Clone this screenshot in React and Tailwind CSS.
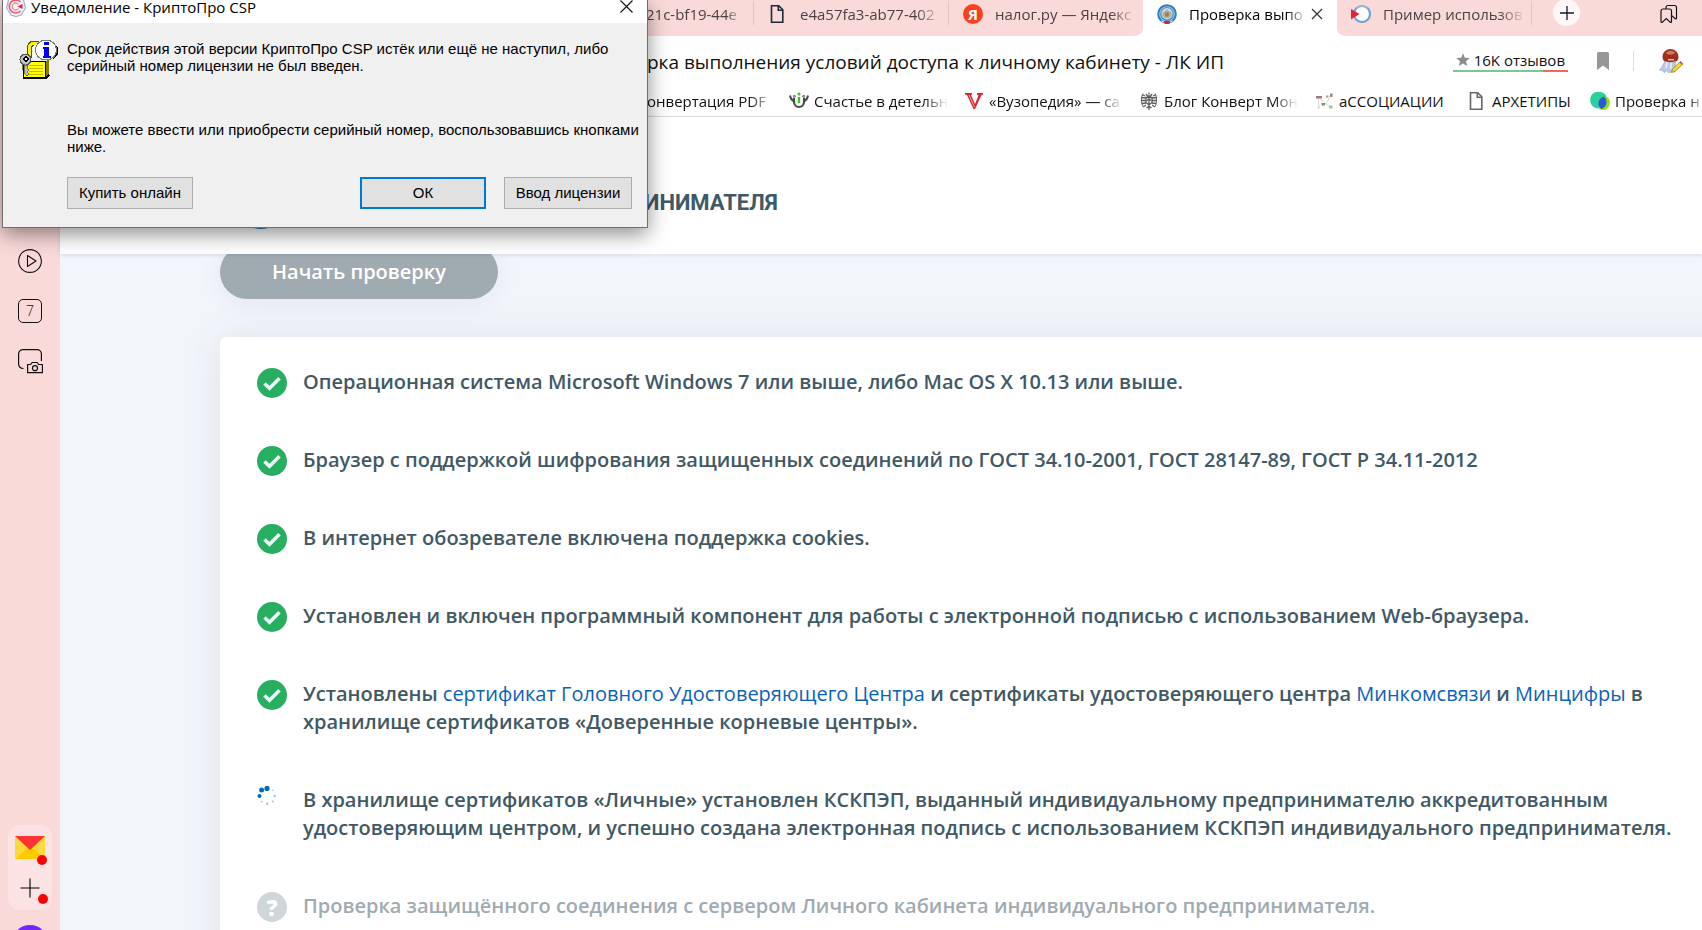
// src/App.jsx

import React from "react";

const FADE = "[mask-image:linear-gradient(to_right,black_82%,transparent)]";

function FileIcon({ color = "#1f2937" }) {
  return (
    <svg viewBox="0 0 20 20" className="size-5 shrink-0" fill="none" stroke={color} strokeWidth="1.6">
      <path d="M3.500 1.800h7.300l4 4v12.400H3.500z" />
      <path d="M10.300 1.800v4.500h4.500" />
    </svg>
  );
}

function YandexIcon() {
  return (
    <span className="flex size-5 shrink-0 items-center justify-center rounded-full bg-[#fc3f1d] text-[15px] leading-none font-bold text-white">
      Я
    </span>
  );
}

function EmblemIcon() {
  return (
    <svg viewBox="0 0 20 20" className="size-5 shrink-0">
      <circle cx="10" cy="10" r="9.8" fill="#2a7cc4" />
      <circle cx="10" cy="10" r="7.8" fill="#a9cdec" />
      <circle cx="10" cy="10" r="6.9" fill="#4b93d2" />
      <circle cx="10" cy="9.6" r="5.6" fill="#dcdcda" />
      <path d="M5.500 7.500l1.600.5L10 5l2.900 3 1.600-.5v4.300L12 14H8l-2.500-2.200z" fill="#b9ab94" />
      <path d="M8.2 8.600h3.600v3.200L10 13l-1.800-1.200z" fill="#8a8274" />
      <path d="M6.500 18l1.300-1h4.400l1.300 1-1.500 2H8z" fill="#d8232a" />
      <path d="M4.500 16.800l2.500 1.400M15.500 16.800L13 18.200" stroke="#fff" strokeWidth="1" />
    </svg>
  );
}

function HeaderLogo() {
  return (
    <svg viewBox="0 0 52 52" className="size-[52px] shrink-0">
      <circle cx="26" cy="26" r="26" fill="#1d6fb8" />
      <circle cx="26" cy="26" r="19" fill="#fff" />
      <circle cx="26" cy="26" r="16" fill="#5ba3de" />
    </svg>
  );
}

function CryptoIcon() {
  return (
    <svg viewBox="0 0 20 20" className="size-5 shrink-0">
      <circle cx="11" cy="10" r="8" fill="#fff" stroke="#6fa3d0" strokeWidth="2.2" />
      <path d="M5.3 4.4a8 8 0 0 1 11.4 0" fill="none" stroke="#9fb9cf" strokeWidth="1.6" />
      <path d="M0 5l8.500 5L0 15.500z" fill="#e5213b" />
    </svg>
  );
}

function CupIcon() {
  return (
    <svg viewBox="0 0 20 20" className="size-5 shrink-0" fill="none">
      <path d="M5 6.500v4.500a5 5 0 0 0 10 0V6.500" stroke="#4a4a4a" strokeWidth="2.200" />
      <path d="M5.500 10C2.500 9.500 1.500 7.500 1 4.500M14.500 10c3-.5 4-2.500 4.500-5.500" stroke="#4a4a4a" strokeWidth="2" />
      <path d="M4 5.500c1-1 2-1 2.500.5M16 5.500c-1-1-2-1-2.500.5" stroke="#777" strokeWidth="1.400" />
      <circle cx="10" cy="3" r="1.600" fill="#3fc51f" />
      <path d="M10 5.800v6.200" stroke="#3fc51f" strokeWidth="2.400" />
    </svg>
  );
}

function VIcon() {
  return (
    <svg viewBox="0 0 20 20" className="size-5 shrink-0">
      <path d="M1 2h7v1.500L7 4l4 9 3.500-8.500L13 3.500V2h6v1.500l-1.500.5L11 18H9.500L3 4 1 3.500z" fill="#d8262c" />
      <path d="M5 4l5.500 12" stroke="#f4b3b3" strokeWidth=".9" />
    </svg>
  );
}

function CoatIcon() {
  return (
    <svg viewBox="0 0 20 20" className="size-5 shrink-0" fill="none" stroke="#5c5c5c" strokeWidth="1.300">
      <path d="M3 3.500l3 1.500M2 6.500l5 .5M2.500 9.500h5M3 12.500l4-.5M4 16l3-2" />
      <path d="M17 3.500l-3 1.500M18 6.500l-5 .5M17.500 9.500h-5M17 12.500l-4-.5M16 16l-3-2" />
      <path d="M4 2.500c-2 3-2 10 0 13M16 2.500c2 3 2 10 0 13" strokeWidth="1" />
      <path d="M7 3l1.500 2h3L13 3M10 1.500v2M7 6.500h6v5L10 14l-3-2.500zM10 7v6M8 9h4M7.500 17l2.500-2 2.500 2M10 15v4" />
    </svg>
  );
}

function GraphIcon() {
  return (
    <svg viewBox="0 0 20 20" className="size-5 shrink-0">
      <path d="M4 6l8 7 5-9M12 13l4 3M4 6l1 10" stroke="#dcd9d2" strokeWidth="1" fill="none" />
      <rect x="2" y="5" width="6" height="2.500" fill="#9b7f7c" />
      <rect x="16" y="2.500" width="2.500" height="3.500" fill="#9a8a6a" />
      <rect x="7.500" y="12" width="3.500" height="2.500" fill="#7f9468" />
      <rect x="12" y="4.500" width="2.500" height="2" fill="#a99a94" />
      <rect x="15" y="14.500" width="3.500" height="3" fill="#a4cb8a" />
      <rect x="3.500" y="15.500" width="2" height="2" fill="#cfd3b9" />
    </svg>
  );
}

function BlobIcon() {
  return (
    <svg viewBox="0 0 20 20" className="size-5 shrink-0">
      <path d="M8.500.8c5 0 8.500 3 8.500 8s-3 8.700-8 8.700S.2 14 .2 9 3.500.8 8.500.8z" fill="#2ad19a" />
      <path d="M13.500 6c3.500-1 6.300 1 6.300 5.500 0 4-2.800 7.500-6.800 7.500-2.500 0-4-1-4-1.500z" fill="#8ee01c" />
      <path d="M14 5.500c2 2 2.800 4 2.500 6.300-.3 2.700-2 5-5 6.200-2-1.500-3.300-3.500-3-6.500.3-2.800 2.500-5 5.500-6z" fill="#2d57d6" />
    </svg>
  );
}

function ProfileIcon() {
  return (
    <svg viewBox="0 0 26 26" className="size-6.5 shrink-0">
      <path d="M7 13l-3 6-2.500 3 3 .5 1.500 2 3-2 2 2.500 3-2 2.500 1 1-10z" fill="#b9c9e6" stroke="#8fa3c6" strokeWidth=".7" />
      <path d="M9 14l-1 6M13 14v7" stroke="#eef3fb" strokeWidth="1.400" />
      <path d="M4.500 9c0-5 4-8 8-8s8 3 8 8c0 3-1.500 4.500-4 4.500-2.500 1-6 1-8 0-2.500 0-4-1.500-4-4.500z" fill="#9d2f1e" />
      <path d="M8 5c2-2.500 6.500-3 9-.5-1 2.500-7 3-9 .5z" fill="#d8735c" />
      <path d="M10 11h6v1.500h-6z" fill="#f0b49a" />
      <path d="M13.500 24.500l1-3.500 8-7.500 2.500 2.500-8 7.500z" fill="#f7d62e" stroke="#8a6d12" strokeWidth=".7" />
      <path d="M21.500 14.500l1-1.500 2.500 2.500-1.200 1.200z" fill="#e4565b" />
    </svg>
  );
}

function LockIcon() {
  return (
    <svg viewBox="0 0 40 40" className="size-10 shrink-0" shapeRendering="crispEdges">
      <path d="M10 19V8l3-4h7" fill="none" stroke="#555500" strokeWidth="5" />
      <path d="M10 19V8l3-4h7" fill="none" stroke="#f5f500" strokeWidth="3" />
      <path d="M15 18V8l3-2" fill="none" stroke="#fff" strokeWidth="2" />
      <path d="M3 22h24l3-3v18l-3 3H4z" fill="#808000" />
      <path d="M4 22h22v16H4z" fill="#ffff00" stroke="#000" strokeWidth="1" />
      <path d="M10 26h14M10 29h14M10 32h14M10 35h14" stroke="#c5b800" strokeWidth="1" />
      <path d="M4 39h23l3-3" stroke="#000" strokeWidth="1.500" fill="none" />
      <circle cx="6.500" cy="20.500" r="5.500" fill="#c0c0c0" stroke="#555" />
      <circle cx="7" cy="20" r="2" fill="#fff" stroke="#000" strokeWidth="1.500" />
      <path d="M5.500 26v9l2 2 2-2-1-2 1-2-1-2V26z" fill="#c0c0c0" stroke="#555" strokeWidth=".8" />
      <path d="M36 6l3 2v7l-5 5z" fill="#000" />
      <ellipse cx="27" cy="11" rx="10.500" ry="10" fill="#fff" stroke="#777" strokeWidth="1" />
      <path d="M25 3h5v3h-5zM23.500 8H30v9h2v2h-8.500v-2H25v-7h-1.500z" fill="#0000f0" />
    </svg>
  );
}

function CspIcon() {
  return (
    <svg viewBox="0 0 20 20" className="size-5 shrink-0" fill="none">
      <path d="M3 1h14l2.500 10L15 18l-5 1.500L5 18 .5 11z" fill="#eef3f8" stroke="#9fb0c4" strokeWidth="1.200" />
      <path d="M14.500 5a6.500 6.500 0 1 0 0 9" stroke="#f0606e" strokeWidth="1.700" />
      <path d="M12.500 7.500a3.500 3.500 0 1 0 0 4" stroke="#f58a94" strokeWidth="1.300" />
      <path d="M11.500 9.500l5-2.500v5z" fill="#e5213b" />
    </svg>
  );
}

function CheckIcon() {
  return (
    <svg viewBox="0 0 30 30" className="size-[30px] shrink-0">
      <circle cx="15" cy="15" r="15" fill="#27ae60" />
      <path d="M7.500 15.500l5 4.800L22.500 10.300" fill="none" stroke="#f1f4fa" strokeWidth="3.600" />
    </svg>
  );
}

function SpinnerIcon() {
  return (
    <svg viewBox="0 0 30 30" className="size-[30px] shrink-0">
      <g fill="#0b6ab8">
        <circle cx="2.500" cy="10" r="2.100" />
        <circle cx="4.600" cy="4" r="2.500" />
        <circle cx="10" cy="2.400" r="2.600" />
      </g>
      <g fill="#9cc4e4">
        <circle cx="15.800" cy="4.300" r="0.800" />
        <circle cx="17.700" cy="10" r="1.200" />
        <circle cx="15.800" cy="15.600" r="1" />
        <circle cx="10.200" cy="17.700" r="1.200" />
        <circle cx="4.600" cy="15.600" r="0.900" />
      </g>
    </svg>
  );
}

function QuestionIcon() {
  return (
    <span className="flex size-[30px] shrink-0 items-center justify-center rounded-full bg-[#cfd6da] text-[22px] leading-none font-extrabold text-white">
      ?
    </span>
  );
}

function Tab({ icon, title, active }) {
  return (
    <div className="flex h-9 w-[194px] shrink-0 items-center pb-2">
      <button
        className={`flex min-w-0 flex-1 items-center gap-3 pl-3.5 text-left text-[15px] leading-5 ${
          active ? "text-black" : "text-[#4d4143]"
        }`}
      >
        {icon}
        <span className={`overflow-hidden whitespace-nowrap ${active ? "w-[118px]" : "w-[142px]"} ${FADE}`}>
          {title}
        </span>
      </button>
      {active ? (
        <button aria-label="Закрыть" className="mr-3.5 shrink-0">
          <svg viewBox="0 0 12 12" className="size-3" stroke="#333" strokeWidth="1.200">
            <path d="M1 1l10 10M11 1L1 11" />
          </svg>
        </button>
      ) : null}
    </div>
  );
}

function TabBar() {
  return (
    <div className="flex h-9 bg-white">
      <div className="flex shrink-0 rounded-br-lg bg-[#fadad9]">
        <div className="flex h-9 w-[753px] shrink-0 items-center justify-end pr-2.5 pb-2 text-[15px] leading-5 text-[#4d4143]">
          <span className={`w-[97px] overflow-hidden whitespace-nowrap ${FADE}`}>21c-bf19-44e</span>
        </div>
        <div className="mt-px h-6 w-px bg-[#e3c5c5]" />
        <Tab icon={<FileIcon />} title="e4a57fa3-ab77-402" />
        <div className="mt-px h-6 w-px bg-[#e3c5c5]" />
        <Tab icon={<YandexIcon />} title="налог.ру — Яндекс" />
      </div>
      <Tab icon={<EmblemIcon />} title="Проверка выпо" active />
      <div className="flex flex-1 justify-between rounded-bl-lg bg-[#fadad9]">
        <div className="flex">
          <Tab icon={<CryptoIcon />} title="Пример использов" />
          <div className="mt-px h-6 w-px bg-[#e3c5c5]" />
          <button
            aria-label="Новая вкладка"
            className="-mt-px ml-[21px] flex size-[27px] items-center justify-center rounded-full bg-[#fff7f7]"
          >
            <svg viewBox="0 0 14 14" className="size-3.5" stroke="#111a2b" strokeWidth="1.300">
              <path d="M7 0v14M0 7h14" />
            </svg>
          </button>
        </div>
        <button aria-label="Коллекции" className="mr-6 self-start pt-1">
          <svg viewBox="0 0 18 20" className="h-5 w-[18px]" fill="none" stroke="#111" strokeWidth="1.200">
            <path d="M1 17.500V7a2 2 0 0 1 2-2h6.500a2 2 0 0 1 2 2v10.500c0 1-.8 1.200-1.400.6L6.300 14.500l-3.900 3.600c-.6.600-1.400.4-1.400-.6z" />
            <path d="M6 5V3.500a2 2 0 0 1 2-2h6.500a2 2 0 0 1 2 2V14c0 1-.8 1.200-1.400.6L11.500 11.500" />
          </svg>
        </button>
      </div>
    </div>
  );
}

function Bookmark({ icon, title, width, fade }) {
  return (
    <a href="#" className="flex shrink-0 items-center gap-[5px]">
      {icon}
      <span className={`overflow-hidden whitespace-nowrap ${width} ${fade ? FADE : ""}`}>{title}</span>
    </a>
  );
}

function Toolbar() {
  return (
    <div className="border-b border-[#e0e0e0] bg-white">
      <div className="flex h-[50px] items-center justify-between pr-[18px] pl-[587px]">
        <p className="pt-0.5 text-[19px] leading-6 whitespace-nowrap text-[#111]">
          рка выполнения условий доступа к личному кабинету - ЛК ИП
        </p>
        <div className="flex items-center">
          <a href="#" className="text-[15px] leading-5 whitespace-nowrap text-[#111]">
            <span className="flex items-center gap-1 px-[3px]">
              <svg viewBox="0 0 14 14" className="size-3.5" fill="#8e8e8e">
                <path d="M7 .3l1.800 4.400 4.900.4-3.700 3.200 1.200 4.800L7 10.500l-4.200 2.600L4 8.300.3 5.100l4.900-.4z" />
              </svg>
              16K отзывов
            </span>
            <span className="flex h-0.5">
              <span className="w-[78%] bg-[#7cc78f]" />
              <span className="flex-1 bg-[#f0695a]" />
            </span>
          </a>
          <button aria-label="В закладки" className="ml-[29px]">
            <svg viewBox="0 0 12 18" className="h-[18px] w-3" fill="#969696">
              <path d="M0 1.500A1.500 1.500 0 0 1 1.500 0h9A1.500 1.500 0 0 1 12 1.500V18l-6-4.500L0 18z" />
            </svg>
          </button>
          <span className="mr-6 ml-6 h-5 w-px bg-[#dcdcdc]" />
          <button aria-label="Профиль">
            <ProfileIcon />
          </button>
        </div>
      </div>
      <div className="flex h-[30px] items-center gap-4 overflow-hidden pl-[587px] text-[15px] leading-6 text-[#111]">
        <a href="#" className={`w-[126px] shrink-0 overflow-hidden whitespace-nowrap ${FADE}`}>
          онвертация PDF
        </a>
        <Bookmark icon={<CupIcon />} title="Счастье в детельн" width="w-[134px]" fade />
        <Bookmark icon={<VIcon />} title="«Вузопедия» — са" width="w-[134px]" fade />
        <Bookmark icon={<CoatIcon />} title="Блог Конверт Мон" width="w-[134px]" fade />
        <Bookmark icon={<GraphIcon />} title="аССОЦИАЦИИ" width="w-[112px]" />
        <Bookmark icon={<FileIcon color="#666" />} title="АРХЕТИПЫ" width="w-[82px]" />
        <Bookmark icon={<BlobIcon />} title="Проверка н" width="w-[90px]" fade />
      </div>
    </div>
  );
}

function Sidebar() {
  return (
    <aside className="flex w-15 shrink-0 flex-col items-center bg-[#fadad9] pt-[213px]">
      <div className="flex flex-col gap-[26px]">
        <button aria-label="Видео">
          <svg viewBox="0 0 24 24" className="size-6" fill="none" stroke="#111" strokeWidth="1.100">
            <circle cx="12" cy="12" r="11.400" />
            <path d="M9.500 6.500v11l8.500-5.500z" strokeLinejoin="round" />
          </svg>
        </button>
        <button className="size-6 rounded-[5px] border border-[#111] text-[14px] leading-none font-light text-[#111]">
          7
        </button>
        <button aria-label="Снимок экрана">
          <svg viewBox="0 0 24 24" className="size-6 overflow-visible" fill="none" stroke="#111" strokeWidth="1.200">
            <path d="M5.500 19.500H5a4.400 4.400 0 0 1-4.400-4.400V5A4.400 4.400 0 0 1 5 .6h14A4.400 4.400 0 0 1 23.400 5v7" />
            <path d="M9.600 15.500h3l1.500-2h5l1.500 2h3.800v8.200H9.600z" strokeLinejoin="round" />
            <circle cx="17" cy="19.200" r="2.500" />
          </svg>
        </button>
      </div>
      <div className="mt-auto flex h-[85px] w-11 flex-col items-center gap-[19px] rounded-xl bg-[#fae3e2] pt-[11px]">
        <button aria-label="Почта" className="relative">
          <svg viewBox="0 0 30 23" className="h-[23px] w-[30px]">
            <path d="M0 0h30v23H0z" fill="#ffd83d" />
            <path d="M0 23l15-13 15 13z" fill="#ffcb00" />
            <path d="M0 0h30L15 14z" fill="#ff3333" />
          </svg>
          <span className="absolute -right-0.5 -bottom-1.5 size-2.5 rounded-full bg-[#ff0000]" />
        </button>
        <button aria-label="Добавить" className="relative">
          <svg viewBox="0 0 20 20" className="size-5" stroke="#000" strokeWidth="1.100">
            <path d="M10 .5v19M.5 10h19" />
          </svg>
          <span className="absolute -right-2 -bottom-1.5 size-2.5 rounded-full bg-[#ff0000]" />
        </button>
      </div>
      <button aria-label="Алиса" className="mt-[15px] -mb-[31px] size-9 shrink-0 rounded-full bg-[#7028ff]" />
    </aside>
  );
}

const CHECKS = [
  { status: "ok", text: "Операционная система Microsoft Windows 7 или выше, либо Mac OS X 10.13 или выше." },
  {
    status: "ok",
    text: "Браузер с поддержкой шифрования защищенных соединений по ГОСТ 34.10-2001, ГОСТ 28147-89, ГОСТ Р 34.11-2012",
  },
  { status: "ok", text: "В интернет обозревателе включена поддержка cookies." },
  {
    status: "ok",
    text: "Установлен и включен программный компонент для работы с электронной подписью с использованием Web-браузера.",
  },
  {
    status: "ok",
    text: (
      <>
        Установлены <CertLink>сертификат Головного Удостоверяющего Центра</CertLink> и сертификаты удостоверяющего
        центра <CertLink>Минкомсвязи</CertLink> и <CertLink>Минцифры</CertLink> в хранилище сертификатов «Доверенные
        корневые центры».
      </>
    ),
  },
  {
    status: "loading",
    text: "В хранилище сертификатов «Личные» установлен КСКПЭП, выданный индивидуальному предпринимателю аккредитованным удостоверяющим центром, и успешно создана электронная подпись с использованием КСКПЭП индивидуального предпринимателя.",
  },
  {
    status: "pending",
    text: "Проверка защищённого соединения с сервером Личного кабинета индивидуального предпринимателя.",
  },
];

function CertLink({ children }) {
  return (
    <a href="#" className="font-normal text-[#0b62b8]">
      {children}
    </a>
  );
}

function CheckRow({ status, text }) {
  return (
    <li className="flex items-start gap-4">
      {status === "ok" && <CheckIcon />}
      {status === "loading" && <SpinnerIcon />}
      {status === "pending" && <QuestionIcon />}
      <p
        className={`pb-0.5 text-[20px] leading-7 font-semibold ${
          status === "pending" ? "text-[#a0abb1]" : "text-[#405965]"
        }`}
      >
        {text}
      </p>
    </li>
  );
}

function Dialog() {
  const button = "h-8 bg-[#e1e1e1] text-[15px] leading-5 text-black";

  return (
    <div
      role="dialog"
      aria-label="Уведомление - КриптоПро CSP"
      className="absolute top-0 left-0.5 z-20 w-[646px] border border-t-0 border-[#6e6e6e] bg-[#f0f0f0] font-['Liberation_Sans',sans-serif] text-black shadow-[0_6px_20px_rgba(0,0,0,0.45)]"
    >
      <div className="flex h-[23px] items-center bg-white pr-[14px] pb-2.5 pl-[3px]">
        <CspIcon />
        <span className="ml-[5px] flex-1 font-['Open_Sans',sans-serif] text-[15px] leading-5">
          Уведомление - КриптоПро CSP
        </span>
        <button aria-label="Закрыть">
          <svg viewBox="0 0 13 13" className="size-[13px]" stroke="#111" strokeWidth="1.100">
            <path d="M.5.5l12 12M12.500.5l-12 12" />
          </svg>
        </button>
      </div>
      <div className="flex gap-2 pt-4 pr-[15px] pb-[18px] pl-4">
        <LockIcon />
        <div className="min-w-0 flex-1 text-[15px] leading-[17px] whitespace-nowrap">
          <p className="pt-px">
            Срок действия этой версии КриптоПро CSP истёк или ещё не наступил, либо
            <br />
            серийный номер лицензии не был введен.
          </p>
          <p className="mt-[47px]">
            Вы можете ввести или приобрести серийный номер, воспользовавшись кнопками
            <br />
            ниже.
          </p>
          <div className="mt-[22px] flex">
            <button className={`${button} w-[126px] border border-[#adadad]`}>Купить онлайн</button>
            <button className={`${button} ml-auto w-[126px] border-2 border-[#0078d7]`}>ОК</button>
            <button className={`${button} ml-[18px] w-[128px] border border-[#adadad]`}>Ввод лицензии</button>
          </div>
        </div>
      </div>
    </div>
  );
}

export default function App() {
  return (
    <div className="relative flex h-screen flex-col overflow-hidden bg-white font-['Open_Sans',sans-serif]">
      <TabBar />
      <div className="flex min-h-0 flex-1">
        <Sidebar />
        <div className="flex min-w-0 flex-1 flex-col">
          <Toolbar />
          <header className="relative z-10 flex items-center bg-white pt-15 pb-[25px] pl-[175px] shadow-[0_1px_4px_rgba(60,70,100,0.14)]">
            <HeaderLogo />
            <h1 className="ml-[357px] font-['Roboto',sans-serif] text-[22px] leading-8 font-bold text-[#405965]">
              ИНИМАТЕЛЯ
            </h1>
          </header>
          <main className="flex-1 overflow-hidden bg-[#f2f5fa] pl-40">
            <button className="-mt-[9px] h-[54px] w-[278px] rounded-full bg-[#a0abb1] text-[20px] leading-7 font-semibold text-white shadow-[0_4px_24px_rgba(64,89,101,0.08)]">
              Начать проверку
            </button>
            <ul className="mt-[38px] -mr-12 flex flex-col gap-12 rounded-tl-md bg-white pt-[31px] pr-[76px] pb-12 pl-[37px] shadow-[0_0_40px_rgba(64,80,90,0.10)]">
              {CHECKS.map((check, idx) => (
                <CheckRow key={idx} {...check} />
              ))}
            </ul>
          </main>
        </div>
      </div>
      <Dialog />
    </div>
  );
}
